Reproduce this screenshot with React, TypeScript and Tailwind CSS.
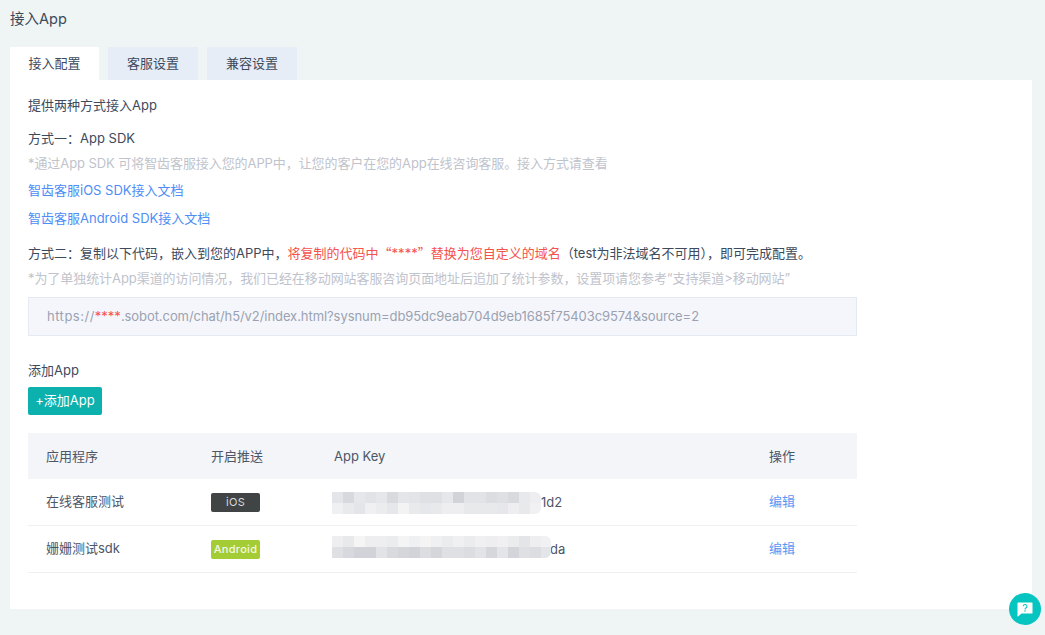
import React from 'react'

const font = "font-['Inter','Noto_Sans_CJK_SC',sans-serif]"

// blurred key cells, two rows per table row
const blurOne = [
  ['#e4e5e8', '#d8d9de', '#e6e7ea', '#e2e3e6', '#e6e7ea', '#d9dade', '#e4e5e8', '#e3e4e8', '#dfe0e4', '#dfe0e4', '#e6e7ea', '#d2d3d8', '#e2e3e7', '#e2e3e7', '#dcdde1', '#dfe0e4', '#d9dade', '#e8e9ec', '#eeeef0'],
  ['#eff0f1', '#e9eaec', '#e4e5e8', '#f0f0f2', '#ebecee', '#e6e7ea', '#f3f3f4', '#e9eaec', '#e6e7ea', '#e8e9eb', '#eeeef0', '#eeeef0', '#e8e9eb', '#e8e9eb', '#e8e9eb', '#e6e7ea', '#eeeef0', '#e8e9eb', '#f1f1f3'],
]
const blurTwo = [
  ['#eeeef0', '#e8e9eb', '#f5f5f6', '#eeeef0', '#eeeef0', '#ebecee', '#f4f4f5', '#eff0f1', '#f4f4f5', '#eff0f1', '#ebecee', '#f0f0f2', '#ebecee', '#f0f0f2', '#eeeef0', '#f0f0f2', '#ebecee', '#e4e5e8', '#eeeef0', '#f1f1f3'],
  ['#dfe0e4', '#d8d9de', '#d2d3d8', '#d2d3d8', '#e2e3e6', '#d9dade', '#d5d6da', '#d2d3d8', '#dcdde1', '#d5d6da', '#dfe0e4', '#dfe0e4', '#dcdde1', '#e2e3e6', '#d6d7dc', '#e4e5e8', '#d4d5da', '#dfe0e4', '#dcdde1', '#e4e5e8'],
]

function Blur({ rows, className }: { rows: string[][]; className: string }) {
  return (
    <div className={`absolute left-[-2px] flex flex-col overflow-hidden rounded-r-[6px] ${className}`}>
      {rows.map((row, i) => (
        <div key={i} className="flex h-[11px]">
          {row.map((c, j) => (
            <div key={j} className="h-full w-[11px] shrink-0" style={{ backgroundColor: c }} />
          ))}
        </div>
      ))}
    </div>
  )
}

function Tab({ label, active }: { label: string; active?: boolean }) {
  return (
    <div
      className={`flex h-[33px] items-center justify-center text-[13px] text-[#3d4a5c] ${
        active ? 'w-[89px] bg-white' : 'w-[90px] bg-[#e6edf7]'
      }`}
    >
      {label}
    </div>
  )
}

function AppRow({
  name,
  badge,
  badgeClass,
  suffix,
  suffixClass,
  blur,
  blurClass,
}: {
  name: string
  badge: string
  badgeClass: string
  suffix: string
  suffixClass: string
  blur: string[][]
  blurClass: string
}) {
  return (
    <div className="flex h-[47px] items-center border-b border-[#eff0f2] text-[13px] text-[#4d5667]">
      <div className="w-[183px] pl-[18px]">{name}</div>
      <div className="w-[123px]">
        <span
          className={`flex h-[19px] w-[49px] items-center justify-center rounded-[2px] text-[11px] tracking-[0.3px] ${badgeClass}`}
        >
          {badge}
        </span>
      </div>
      <div className="relative h-full w-[435px]">
        <span className={`absolute top-[14px] ${suffixClass}`}>{suffix}</span>
        <Blur rows={blur} className={blurClass} />
      </div>
      <a className="text-[#5a97f5]">编辑</a>
    </div>
  )
}

export default function App() {
  return (
    <div className={`relative h-[635px] w-[1045px] overflow-hidden bg-[#eff4f5] px-[10px] ${font}`}>
      <h1 className="flex h-[47px] items-start pt-[10px] text-[14.5px] leading-[18px] font-normal text-[#3d4a5c]">接入App</h1>

      <div className="flex gap-[9px]">
        <Tab label="接入配置" active />
        <Tab label="客服设置" />
        <Tab label="兼容设置" />
      </div>

      <div className="h-[529px] w-[1022px] bg-white pl-[18px] text-[13px] text-[#3d4a5c]">
        <p className="pt-[16px] leading-[18px]">提供两种方式接入App</p>
        <p className="mt-[15px] leading-[18px]">方式一：App SDK</p>
        <p className="mt-[7px] leading-[18px] tracking-[-0.08px] text-[#bfc3cc]">
          *通过App SDK 可将智齿客服接入您的APP中，让您的客户在您的App在线咨询客服。接入方式请查看
        </p>
        <p className="mt-[9px] leading-[18px] text-[#4d8df5]">智齿客服iOS SDK接入文档</p>
        <p className="mt-[10px] leading-[18px] text-[#4d8df5]">智齿客服Android SDK接入文档</p>
        <p className="mt-[17px] leading-[18px]">
          方式二：复制以下代码，嵌入到您的APP中，
          <span className="text-[#f4524d]">
            将复制的代码中
            <span className="font-['Noto_Sans_CJK_SC',sans-serif]">“</span>
            ****
            <span className="font-['Noto_Sans_CJK_SC',sans-serif]">”</span>
            替换为您自定义的域名
          </span>
          （test为非法域名不可用），即可完成配置。
        </p>
        <p className="mt-[7px] leading-[18px] tracking-[-0.07px] text-[#bfc3cc]">
          *为了单独统计App渠道的访问情况，我们已经在移动网站客服咨询页面地址后追加了统计参数，设置项请您参考“支持渠道&gt;移动网站”
        </p>
        <div className="mt-[10px] flex h-[39px] w-[829px] items-center border border-[#e4e9f2] bg-[#f5f6fb] pl-[18px] text-[#9aa2b1]">
          <span className="tracking-[0.5px]">https://</span>
          <span className="text-[#f4524d]">****</span>
          <span className="tracking-[-0.07px]">.sobot.com/chat/h5/v2/index.html?sysnum=db95dc9eab704d9eb1685f75403c9574&amp;source=2</span>
        </div>

        <p className="mt-[25px] leading-[18px]">添加App</p>
        <button
          type="button"
          className="mt-[8px] flex h-[28px] w-[74px] items-center justify-center rounded-[2px] bg-[#0cb0ad] text-[13px] text-white"
        >
          +添加App
        </button>

        <div className="mt-[18px] w-[829px]">
          <div className="flex h-[46px] items-center bg-[#f3f5f9] pt-[1px] text-[13px] text-[#4d5667]">
            <div className="w-[183px] pl-[18px]">应用程序</div>
            <div className="w-[123px]">开启推送</div>
            <div className="w-[435px]">App Key</div>
            <div>操作</div>
          </div>
          <AppRow
            name="在线客服测试"
            badge="iOS"
            badgeClass="bg-[#404444] text-[#d8dada]"
            suffix="1d2"
            suffixClass="left-[207px]"
            blur={blurOne}
            blurClass="top-[13px] w-[209px]"
          />
          <AppRow
            name="姗姗测试sdk"
            badge="Android"
            badgeClass="bg-[#a3cc35] font-medium text-[#f3f8e2]"
            suffix="da"
            suffixClass="left-[216px]"
            blur={blurTwo}
            blurClass="top-[10px] w-[219px]"
          />
        </div>
      </div>

      {/* help bubble */}
      <div className="absolute top-[593px] left-[1009px] flex h-[32px] w-[32px] items-center justify-center rounded-full bg-[#06c4c0]">
        <svg width="16" height="15" viewBox="0 0 16 15" aria-hidden="true">
          <path d="M1 0.5h14a.5.5 0 0 1 .5.5v10a.5.5 0 0 1-.5.5H4.5L1 14.5a.3.3 0 0 1-.5-.2V1A.5.5 0 0 1 1 .5z" fill="#fff" />
          <path d="M6.2 4.3a1.9 1.9 0 1 1 2.7 1.8c-.6.3-.9.6-.9 1.3" fill="none" stroke="#06c4c0" strokeWidth="1.1" />
          <circle cx="8" cy="9.1" r=".75" fill="#06c4c0" />
        </svg>
      </div>
    </div>
  )
}
